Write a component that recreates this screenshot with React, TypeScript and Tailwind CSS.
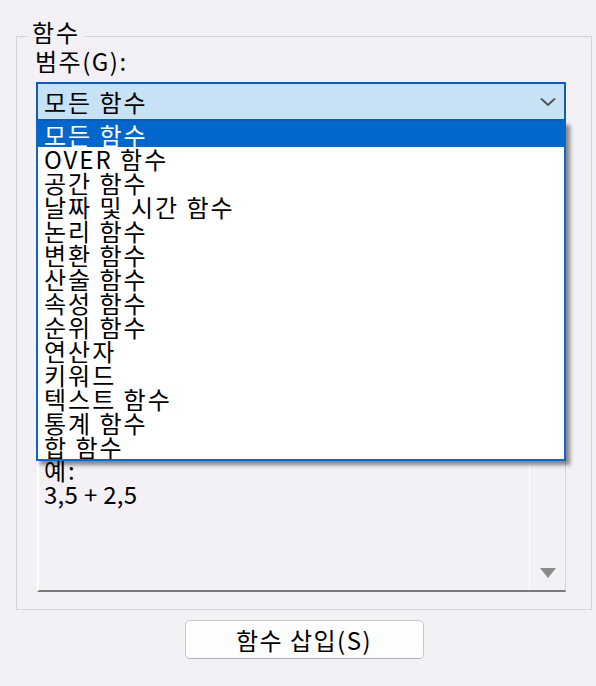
import React from "react";

const categories = [
  "모든 함수",
  "OVER 함수",
  "공간 함수",
  "날짜 및 시간 함수",
  "논리 함수",
  "변환 함수",
  "산술 함수",
  "속성 함수",
  "순위 함수",
  "연산자",
  "키워드",
  "텍스트 함수",
  "통계 함수",
  "합 함수",
];

export default function App() {
  const selected = 0;

  return (
    <div className="w-[596px] h-[686px] overflow-hidden bg-[#f4f1f6] pt-[20px] text-[24px] leading-[24px] tracking-[2px] text-black font-['Noto_Sans_CJK_KR',sans-serif]">
      <div className="ml-[16px] w-[576px] flex flex-col">
        <fieldset className="border border-[#d5d3d7] pb-[17px]">
          <legend className="ml-[11px] px-[4px] pb-[8px] leading-[24px]">함수</legend>

          <div className="-mt-[3px] ml-[18px] tracking-[1.5px]">범주(G):</div>

          {/* combo box with open list */}
          <div className="relative ml-[19px] mt-[9px] w-[530px]">
            <div className="h-[39px] border-2 border-[#0e5bb8] bg-[#c8e2f5] flex items-center justify-between pl-[6px] pr-[8px]">
              <span>모든 함수</span>
              <svg width="16" height="10" viewBox="0 0 16 10" fill="none">
                <polyline points="1,1.5 8,8 15,1.5" stroke="#505050" strokeWidth="1.8" />
              </svg>
            </div>

            <ul className="absolute left-0 top-full z-10 w-full border-2 border-[#0e66c8] border-t-[#0167cc] bg-white shadow-[4px_4px_4px_rgba(0,0,0,0.45)]">
              {categories.map((c, i) => (
                <li
                  key={c}
                  className={
                    i === selected
                      ? "h-[24px] pl-[6px] whitespace-nowrap bg-[#0167cc] text-white"
                      : "h-[24px] pl-[6px] whitespace-nowrap"
                  }
                >
                  {c}
                </li>
              ))}
            </ul>
          </div>

          {/* description box (behind the list) */}
          <div className="ml-[20px] mt-[89px] w-[529px] h-[382px] flex border-l-2 border-l-white border-b-2 border-b-[#7a7a7a] border-r border-r-[#d6d6d6]">
            <div className="flex-1 pl-[5px] pt-[248px]">
              <div>예:</div>
              <div className="tracking-[0.3px]">3,5 + 2,5</div>
            </div>
            <div className="w-[36px] border-l border-l-white flex items-end justify-center pb-[12px]">
              <svg width="16" height="10" viewBox="0 0 16 10">
                <polygon points="0,0 16,0 8,10" fill="#8a8a8a" />
              </svg>
            </div>
          </div>
        </fieldset>

        <button className="mx-auto mt-[10px] w-[239px] h-[39px] rounded-[5px] border border-[#cacaca] border-b-[#b3b3b3] bg-[#fdfdfd] flex items-center justify-center leading-[24px] tracking-[1.5px]">
          함수 삽입(S)
        </button>
      </div>
    </div>
  );
}
